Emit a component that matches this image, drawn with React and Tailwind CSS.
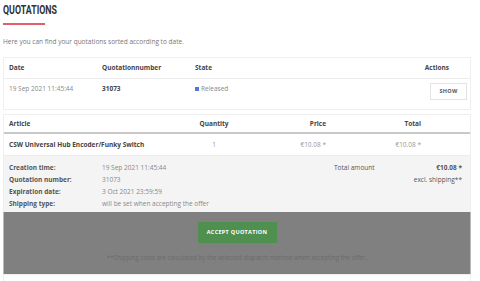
import React from 'react';

const body = { fontFamily: '"Open Sans", "Noto Sans", sans-serif' };

const App = () => {
  const info = [
    ['Creation time:', '19 Sep 2021 11:45:44'],
    ['Quotation number:', '31073'],
    ['Expiration date:', '3 Oct 2021 23:59:59'],
    ['Shipping type:', 'will be set when accepting the offer'],
  ];

  return (
    <div className="w-[480px] h-[281px] overflow-hidden bg-white pl-[3px] pr-[9px]" style={body}>
      <h1
        className="pt-[4px] text-[13px] leading-[12px] font-bold text-[#333] origin-left scale-x-[0.68] whitespace-nowrap"
        style={{ fontFamily: 'Roboto, "Liberation Sans", sans-serif' }}
      >
        QUOTATIONS
      </h1>
      <div className="mt-[7px] w-[42px] h-[2px] bg-[#e35d6a]" />
      <p className="mt-[12px] text-[6.5px] leading-[9px] text-[#777]">
        Here you can find your quotations sorted according to date.
      </p>

      <div className="mt-[11px] border border-[#efefef]">
        <div className="grid grid-cols-[93px_93px_1fr_60px] h-[21px] items-center border-b border-[#ececec] text-[6.5px] font-bold text-[#444] px-[5px]">
          <span>Date</span>
          <span>Quotationnumber</span>
          <span>State</span>
          <span className="text-right pr-[16px]">Actions</span>
        </div>
        <div className="grid grid-cols-[93px_93px_1fr_60px] h-[30px] pt-[4px] items-start text-[6.5px] leading-[11px] text-[#888] pl-[5px] pr-[3px]">
          <span>19 Sep 2021 11:45:44</span>
          <span className="font-bold text-[#444]">31073</span>
          <span className="flex items-center gap-[2px]">
            <span className="inline-block w-[4px] h-[4px] bg-[#4a7fd4]" />
            Released
          </span>
          <span className="flex justify-end">
            <button className="w-[37px] h-[17px] border border-[#e3e3e3] bg-white text-[5.5px] font-bold text-[#555] tracking-[0.3px]">
              SHOW
            </button>
          </span>
        </div>
      </div>

      <div className="mt-[4px] border-t border-x border-[#efefef]">
        <div className="grid grid-cols-[165px_80px_72px_95px] h-[19px] items-center border-b-2 border-[#c9c9c9] text-[6.5px] font-bold text-[#444] px-[5px]">
          <span>Article</span>
          <span className="text-center">Quantity</span>
          <span className="text-right">Price</span>
          <span className="text-right">Total</span>
        </div>
        <div className="grid grid-cols-[165px_80px_72px_95px] h-[22px] items-center border-b border-[#ececec] text-[6.5px] text-[#999] px-[5px]">
          <span className="font-bold text-[#444] whitespace-nowrap">CSW Universal Hub Encoder/Funky Switch</span>
          <span className="text-center">1</span>
          <span className="text-right">€10.08 *</span>
          <span className="text-right">€10.08 *</span>
        </div>
        <div className="flex bg-[#f4f4f4] h-[56px] pt-[6px] pl-[5px] pr-[8px] text-[6.5px]">
          <div className="flex flex-col">
            {info.map(([k, v]) => (
              <div key={k} className="flex h-[12px] items-center">
                <span className="w-[93px] font-bold text-[#555]">{k}</span>
                <span className="text-[#888]">{v}</span>
              </div>
            ))}
          </div>
          <div className="flex-1 flex justify-end">
            <div className="flex flex-col w-[128px]">
              <div className="flex h-[12px] items-center justify-between">
                <span className="text-[#555]">Total amount</span>
                <span className="font-bold text-[#555]">€10.08 *</span>
              </div>
              <div className="flex h-[12px] items-center justify-end text-[#555]">excl. shipping**</div>
            </div>
          </div>
        </div>
      </div>

      <div className="bg-[#808080] h-[62px] flex flex-col items-center border-x border-[#b8b8b8]">
        <button className="mt-[10px] w-[79px] h-[21px] bg-[#4f8f4f] text-white text-[5.5px] font-bold tracking-[0.3px]">
          ACCEPT QUOTATION
        </button>
        <p className="mt-[10px] text-[6.2px] text-[#6b6b6b] whitespace-nowrap">
          **Shipping costs are calculated by the selected dispatch method when accepting the offer.
        </p>
      </div>
      <div className="h-[20px] border-x border-t border-[#efefef]" />
    </div>
  );
};

export default App;
